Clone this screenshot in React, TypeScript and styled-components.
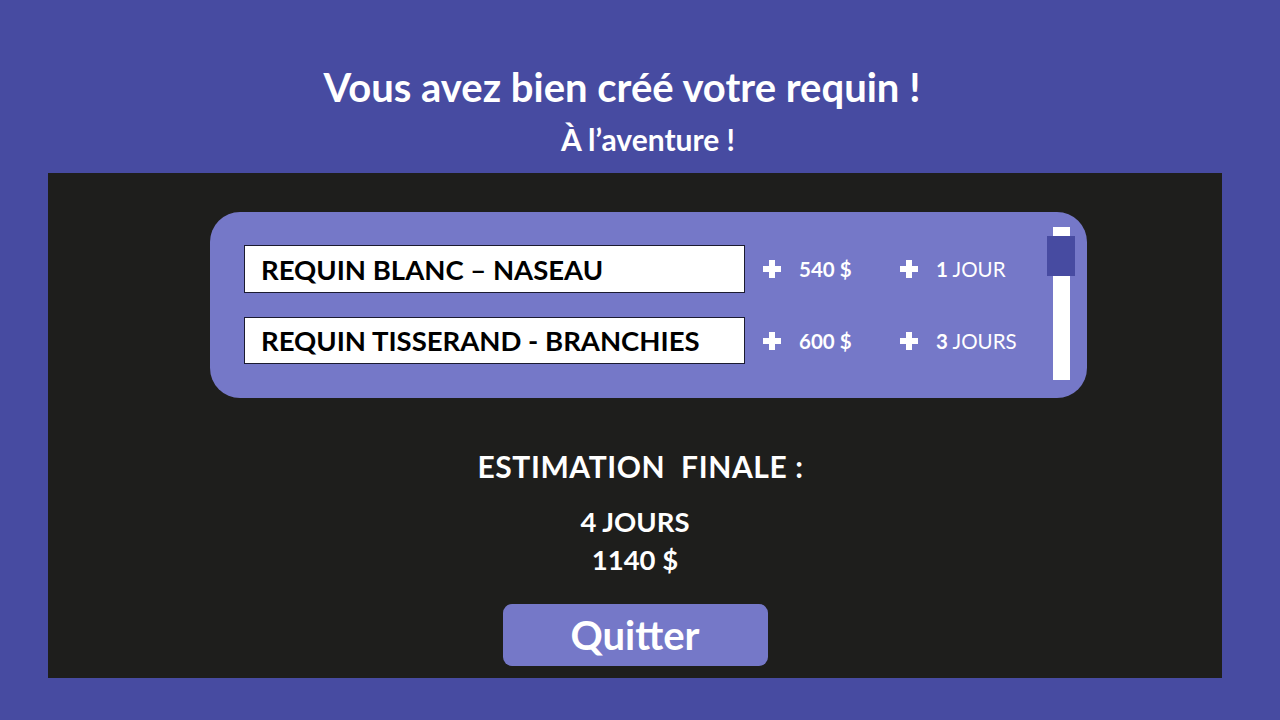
import React from "react";
import styled, { createGlobalStyle } from "styled-components";

const Global = createGlobalStyle`
  html, body { margin: 0; padding: 0; }
  body { background: #474ba1; font-family: Lato, "Open Sans", sans-serif; }
`;

const Page = styled.div`
  width: 1280px;
  height: 720px;
  background: #474ba1;
  display: flex;
  flex-direction: column;
  overflow: hidden;
`;

const Header = styled.header`
  height: 173px;
  display: flex;
  flex-direction: column;
  align-items: center;
  box-sizing: border-box;
  padding-top: 64px;
`;

const Title = styled.h1`
  margin: 0 36px 0 0;
  color: #fff;
  font-weight: 700;
  font-size: 40px;
  line-height: 46px;
`;

const Subtitle = styled.h2`
  margin: 12px 0 0 16px;
  color: #fff;
  font-weight: 700;
  font-size: 30px;
  line-height: 34px;
`;

const Panel = styled.main`
  margin-left: 48px;
  width: 1174px;
  height: 505px;
  background: #1e1e1c;
  display: flex;
  flex-direction: column;
  align-items: center;
  box-sizing: border-box;
  padding-top: 39px;
`;

const Card = styled.section`
  align-self: flex-start;
  margin-left: 162px;
  width: 877px;
  height: 186px;
  flex-shrink: 0;
  background: #7578c8;
  border-radius: 30px;
  display: flex;
  justify-content: space-between;
  box-sizing: border-box;
  padding: 15px 17px 18px 34px;
`;

const Rows = styled.div`
  display: flex;
  flex-direction: column;
  gap: 24px;
  padding-top: 18px;
`;

const Row = styled.div`
  display: flex;
  align-items: center;
`;

const NameBox = styled.div<{ $h: number }>`
  width: 501px;
  height: ${(p) => p.$h}px;
  flex-shrink: 0;
  box-sizing: border-box;
  background: #fff;
  border: 1px solid #1b1b30;
  display: flex;
  align-items: center;
  padding-left: 16px;
  color: #000;
  font-weight: 700;
  font-size: 27.5px;
  white-space: nowrap;
`;

const Cost = styled.div<{ $w: number }>`
  width: ${(p) => p.$w}px;
  flex-shrink: 0;
  box-sizing: border-box;
  display: flex;
  align-items: center;
  gap: 18px;
  padding-left: 18px;
  color: #fff;
  font-size: 20.5px;
  white-space: nowrap;
`;

const Strong = styled.b`
  font-weight: 700;
`;

const Track = styled.div`
  position: relative;
  flex-shrink: 0;
  width: 17px;
  height: 153px;
  background: #fff;
`;

const Thumb = styled.div`
  position: absolute;
  left: -6px;
  top: 9px;
  width: 28px;
  height: 40px;
  background: #474ba1;
`;

const Estimate = styled.h3`
  margin: 50px 0 0 11px;
  color: #fff;
  font-weight: 700;
  font-size: 30px;
  line-height: 36px;
  letter-spacing: 0.6px;
  white-space: pre;
`;

const Totals = styled.div`
  margin-top: 19px;
  display: flex;
  flex-direction: column;
  align-items: center;
  color: #fff;
  font-weight: 700;
  font-size: 27.5px;
  line-height: 38px;
`;

const QuitButton = styled.button`
  margin-top: 25px;
  width: 265px;
  height: 62px;
  border: none;
  border-radius: 9px;
  background: #7578c8;
  color: #fff;
  font-family: Lato, "Open Sans", sans-serif;
  font-weight: 700;
  font-size: 40px;
  line-height: 62px;
  padding: 0;
  cursor: pointer;
`;

const PlusIcon = () => (
  <svg width="18" height="18" viewBox="0 0 18 18">
    <rect x="6" y="0" width="6" height="18" fill="#fff" />
    <rect x="0" y="6" width="18" height="6" fill="#fff" />
  </svg>
);

const items = [
  { name: "REQUIN BLANC – NASEAU", price: "540 $", days: "1", unit: "JOUR", h: 48 },
  { name: "REQUIN TISSERAND - BRANCHIES", price: "600 $", days: "3", unit: "JOURS", h: 47 },
];

export default function App() {
  return (
    <Page>
      <Global />
      <Header>
        <Title>Vous avez bien créé votre requin !</Title>
        <Subtitle>À l’aventure !</Subtitle>
      </Header>
      <Panel>
        <Card>
          <Rows>
            {items.map((it) => (
              <Row key={it.name}>
                <NameBox $h={it.h}>{it.name}</NameBox>
                <Cost $w={137}>
                  <PlusIcon />
                  <Strong>{it.price}</Strong>
                </Cost>
                <Cost $w={160}>
                  <PlusIcon />
                  <span>
                    <Strong>{it.days}</Strong> {it.unit}
                  </span>
                </Cost>
              </Row>
            ))}
          </Rows>
          <Track>
            <Thumb />
          </Track>
        </Card>
        <Estimate>{"ESTIMATION  FINALE :"}</Estimate>
        <Totals>
          <span>4 JOURS</span>
          <span>1140 $</span>
        </Totals>
        <QuitButton>Quitter</QuitButton>
      </Panel>
    </Page>
  );
}
